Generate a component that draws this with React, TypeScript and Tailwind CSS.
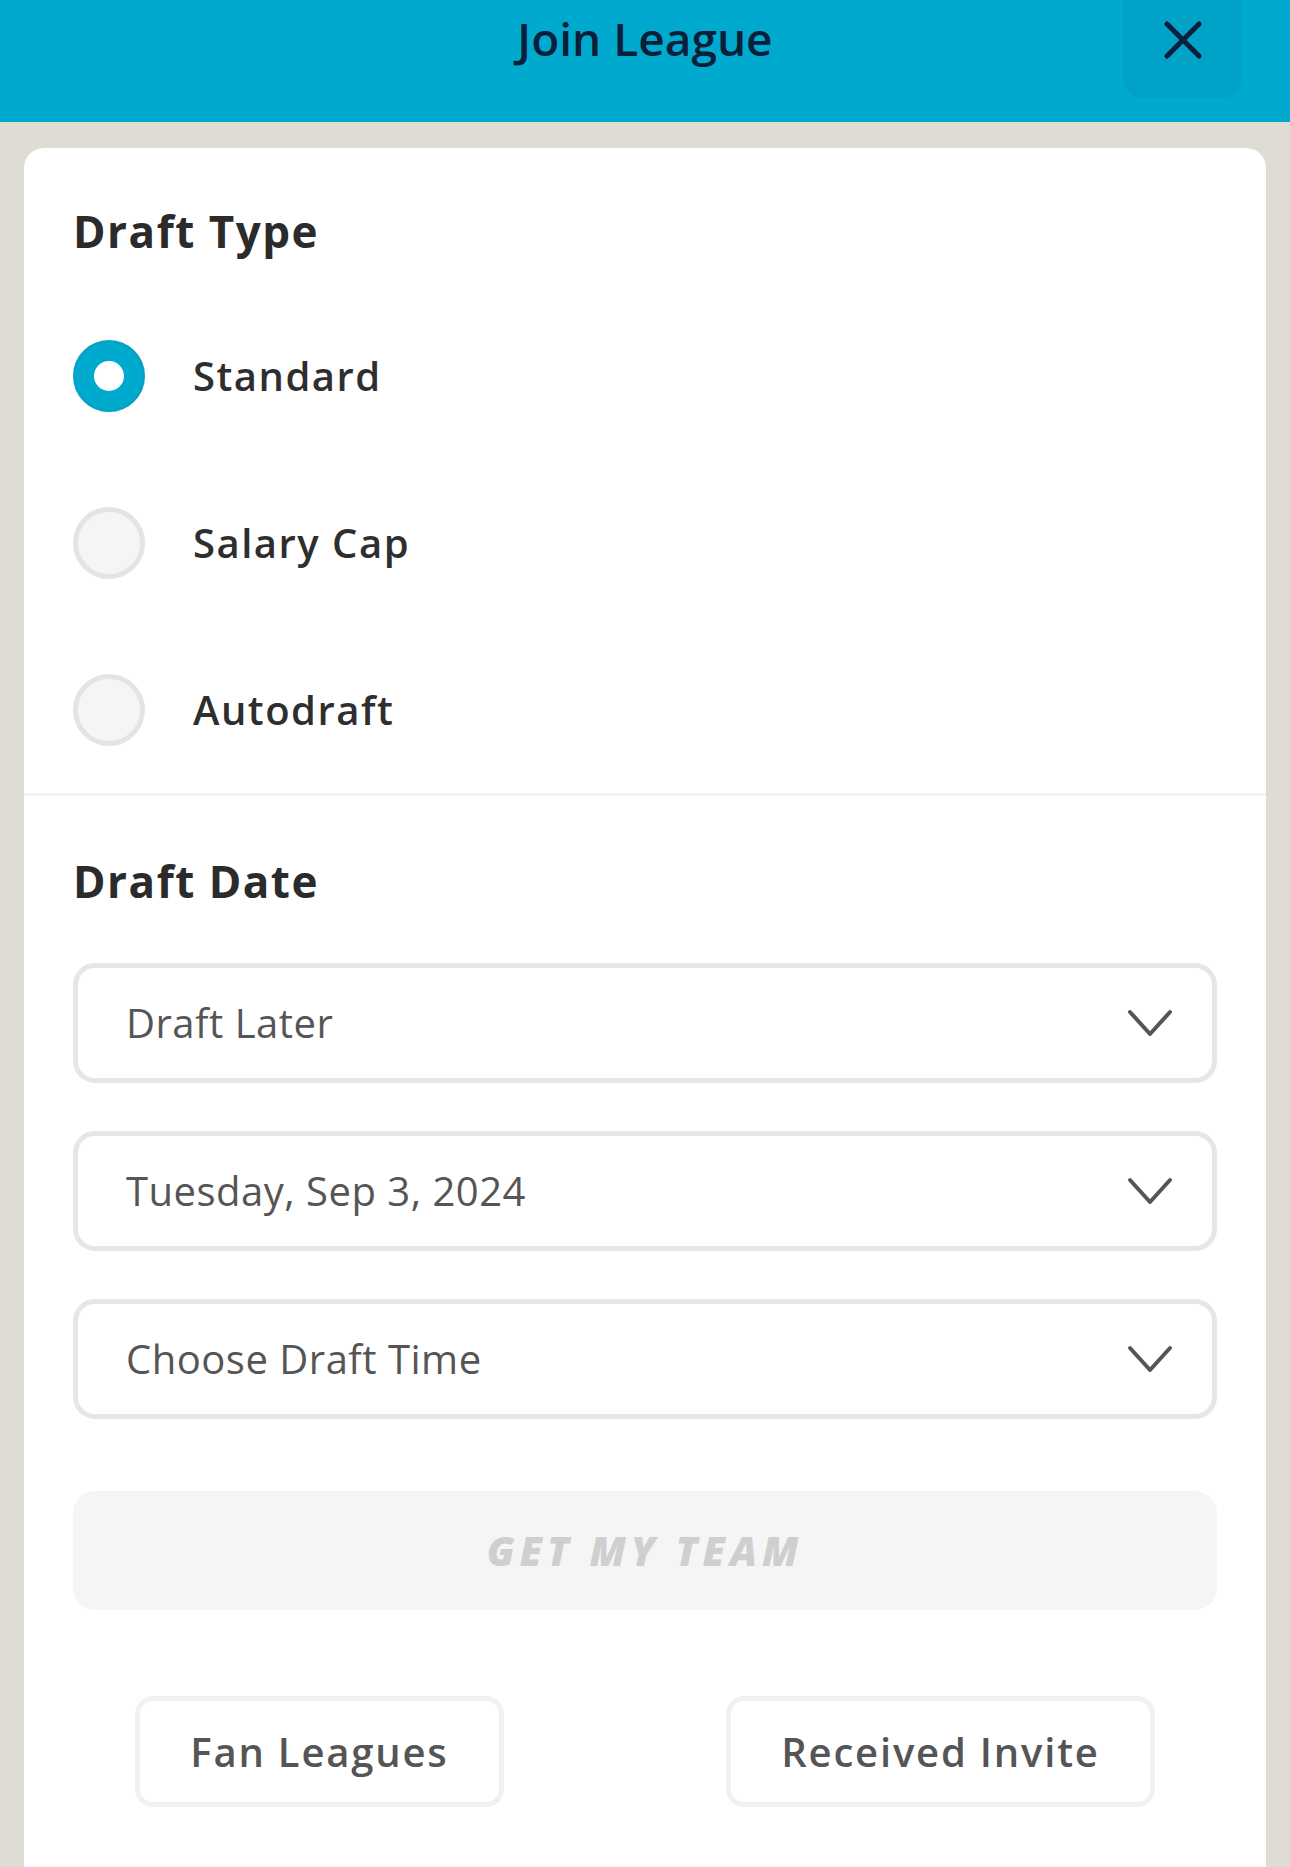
import React from 'react'

const font = "font-['Open_Sans',sans-serif]"

const CloseIcon: React.FC = () => (
  <svg width="38" height="38" viewBox="0 0 38 38" fill="none">
    <path d="M3 3 L35 35 M35 3 L3 35" stroke="#0c1f3a" strokeWidth="5" strokeLinecap="round" />
  </svg>
)

const Chevron: React.FC = () => (
  <svg width="46" height="28" viewBox="0 0 46 28" fill="none">
    <path d="M3 3 L23 25 L43 3" stroke="#555555" strokeWidth="4" strokeLinecap="round" strokeLinejoin="round" />
  </svg>
)

const Radio: React.FC<{label: string; checked?: boolean}> = ({label, checked}) => (
  <div className="h-[167px] flex items-center gap-[48px]">
    {checked ? (
      <div className="w-[72px] h-[72px] rounded-full bg-[#00aacf] border-[3px] border-[#04a2c4] flex items-center justify-center">
        <div className="w-[30px] h-[30px] rounded-full bg-white" />
      </div>
    ) : (
      <div className="w-[72px] h-[72px] rounded-full bg-[#f5f5f5] border-[5px] border-[#e4e4e4]" />
    )}
    <span className={`${font} text-[40px] font-semibold tracking-[1.5px] text-[#2e2e2e]`}>{label}</span>
  </div>
)

const Select: React.FC<{value: string}> = ({value}) => (
  <div className="h-[120px] rounded-[22px] border-[5px] border-[#e6e6e6] bg-white flex items-center justify-between pl-[48px] pr-[39px]">
    <span className={`${font} text-[40px] tracking-[0.5px] text-[#555555]`}>{value}</span>
    <Chevron />
  </div>
)

const Heading: React.FC<{children: React.ReactNode}> = ({children}) => (
  <h2 className={`${font} h-[54px] leading-[54px] text-[44px] font-bold tracking-[1.5px] text-[#2b2b2b]`}>{children}</h2>
)

const OutlineButton: React.FC<{label: string}> = ({label}) => (
  <button className={`${font} h-[111px] px-[50px] rounded-[18px] border-[5px] border-[#f1f1f1] bg-white text-[40px] font-semibold tracking-[1.8px] text-[#555555]`}>
    {label}
  </button>
)

export default function App() {
  return (
    <div className="w-[1290px] h-[1867px] bg-[#dfdcd6] overflow-hidden flex flex-col">
      <header className="relative h-[122px] shrink-0 bg-[#00aacf]">
        <div className="h-[76px] flex items-center justify-center">
          <h1 className={`${font} text-[46px] font-semibold text-[#0c1f3a]`}>Join League</h1>
        </div>
        <button className="absolute right-[48px] top-0 w-[119px] h-[98px] rounded-b-[20px] bg-[#00a3c7] flex justify-center pt-[21px]">
          <CloseIcon />
        </button>
      </header>

      <main className="flex-1 mt-[26px] mx-[24px] bg-white rounded-t-[20px]">
        <section className="px-[49px] pt-[56px]">
          <Heading>Draft Type</Heading>
          <div className="mt-[34px]">
            <Radio label="Standard" checked />
            <Radio label="Salary Cap" />
            <Radio label="Autodraft" />
          </div>
        </section>

        <div className="h-[3px] bg-[#f2f2f2]" />

        <section className="px-[49px] pt-[58px]">
          <Heading>Draft Date</Heading>
          <div className="mt-[55px] flex flex-col gap-[48px]">
            <Select value="Draft Later" />
            <Select value="Tuesday, Sep 3, 2024" />
            <Select value="Choose Draft Time" />
          </div>
          <button className={`${font} mt-[72px] w-full h-[119px] rounded-[22px] bg-[#f5f5f5] text-[40px] font-extrabold italic tracking-[5px] text-[#cfcfcf]`}>
            GET MY TEAM
          </button>
        </section>

        <div className="mt-[86px] flex justify-around">
          <OutlineButton label="Fan Leagues" />
          <OutlineButton label="Received Invite" />
        </div>
      </main>
    </div>
  )
}
